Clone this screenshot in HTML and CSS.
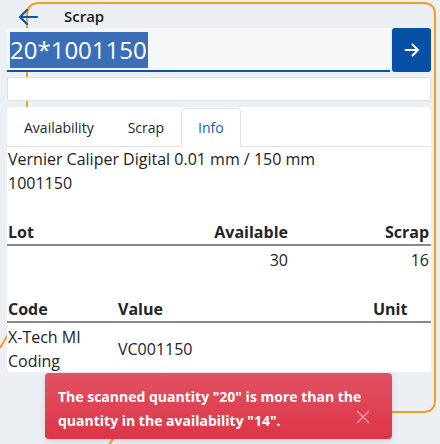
FILE: index.html
```html
<!DOCTYPE html>
<html>
<head>
<meta charset="utf-8">
<link rel="stylesheet" href="styles.css">
</head>
<body>
<svg class="deco" width="440" height="444" viewBox="0 0 440 444">
  <path d="M27 300 V15 Q27 3 40 3 H423 Q435 3 435 15 V400 Q435 412 423 412 H200" fill="none" stroke="#f4a01e" stroke-width="2"/>
  <path d="M0 348 L9 333" fill="none" stroke="#f4a01e" stroke-width="2"/>
  <path d="M108 446 L118 432" fill="none" stroke="#f4a01e" stroke-width="2"/>
</svg>
<div class="app">
  <header class="header">
    <svg class="back" width="22" height="18" viewBox="0 0 22 18"><path d="M20 9 H3 M10 2 L3 9 L10 16" fill="none" stroke="#0b55b0" stroke-width="2.2" stroke-linecap="round" stroke-linejoin="round"/></svg>
    <span class="title">Scrap</span>
  </header>
  <div class="scan">
    <div class="input"><span class="sel">20*1001150</span></div>
    <button class="go"><svg width="16" height="14" viewBox="0 0 16 14"><path d="M1.5 7 H14 M8.5 1.5 L14 7 L8.5 12.5" fill="none" stroke="#fff" stroke-width="2" stroke-linecap="round" stroke-linejoin="round"/></svg></button>
  </div>
  <div class="box2"></div>
  <section class="panel">
    <nav class="tabs">
      <span class="tab">Availability</span>
      <span class="tab">Scrap</span>
      <span class="tab active">Info</span>
    </nav>
    <div class="desc">
      <div>Vernier Caliper Digital 0.01 mm / 150 mm</div>
      <div>1001150</div>
    </div>
    <div class="grid lots">
      <div class="th">Lot</div><div class="th r">Available</div><div class="th r">Scrap</div>
      <div class="td"></div><div class="td r">30</div><div class="td r">16</div>
    </div>
    <div class="grid codes">
      <div class="th">Code</div><div class="th">Value</div><div class="th">Unit</div>
      <div class="td">X-Tech MI<br>Coding</div><div class="td mid">VC001150</div><div class="td"></div>
    </div>
  </section>
</div>
<div class="toast">
  <p>The scanned quantity "20" is more than the quantity in the availability "14".</p>
  <svg class="close" width="14" height="14" viewBox="0 0 14 14"><path d="M1 1 L13 13 M13 1 L1 13" stroke="rgba(255,255,255,0.45)" stroke-width="1.5"/></svg>
</div>
</body>
</html>
```
FILE: styles.css
```css
html, body { margin: 0; padding: 0; }
body {
  width: 440px;
  height: 444px;
  overflow: hidden;
  background: #eceff3;
  font-family: "Open Sans", "Noto Sans", sans-serif;
  color: #212529;
  position: relative;
}
.deco { position: absolute; left: 0; top: 0; z-index: 0; }
.app { position: relative; z-index: 1; padding: 0 9px 0 7px; }
.header { height: 28px; display: flex; align-items: center; }
.back { margin-left: 10px; margin-top: 5px; }
.title { margin-left: 25px; font-size: 15px; font-weight: 600; color: #1b1b1b; margin-top: 4px; }
.scan { display: flex; gap: 2px; height: 44px; }
.input {
  flex: 1;
  background: #f5f7f8;
  border-bottom: 2px solid #0b55b0;
  border-radius: 4px 0 0 0;
  box-sizing: border-box;
  padding: 4px 0 0 3px;
}
.sel {
  display: inline-block;
  background: #3a6fb7;
  color: #fff;
  font-size: 24px;
  line-height: 36px;
  height: 36px;
  padding-right: 1px;
}
.go {
  width: 39px;
  border: 0;
  border-radius: 3px;
  background: #0650a5;
  display: flex;
  align-items: center;
  justify-content: center;
  padding: 0;
}
.box2 {
  margin-top: 5px;
  height: 24px;
  box-sizing: border-box;
  background: #fff;
  border: 1px solid #dde1e5;
  border-radius: 3px;
}
.panel {
  margin-top: 6px;
  background: #fff;
  border-radius: 4px;
  height: 265px;
  box-sizing: border-box;
}
.tabs {
  display: flex;
  height: 40px;
  box-sizing: border-box;
  border-bottom: 1px solid #dee2e6;
  padding-top: 1px;
}
.tab {
  border: 1px solid transparent;
  border-radius: 4px 4px 0 0;
  padding: 0 16px;
  font-size: 14px;
  line-height: 37px;
  margin-bottom: -1px;
  color: #212529;
}
.tab.active {
  color: #1361b8;
  border-color: #dee2e6 #dee2e6 #fff;
  background: #fff;
}
.desc { font-size: 16px; line-height: 24px; padding-left: 1px; color: #222; }
.grid { display: grid; font-size: 16px; line-height: 24px; }
.lots { grid-template-columns: 1fr 100px 141px; margin-top: 25px; }
.codes { grid-template-columns: 110px 255px 1fr; margin-top: 25px; }
.th { font-weight: 700; border-bottom: 2px solid #8a8a8a; padding: 0 2px 0 1px; }
.td { padding: 2px 2px 0 1px; }
.r { text-align: right; }
.mid { align-self: center; }
.toast {
  position: absolute;
  z-index: 2;
  left: 45px;
  top: 373px;
  width: 347px;
  height: 66px;
  box-sizing: border-box;
  border-radius: 4px;
  background: linear-gradient(#e15363, #dc3546);
  box-shadow: 0 2px 6px rgba(0,0,0,0.12);
  padding: 12px 0 0 13px;
}
.toast p {
  margin: 0;
  width: 310px;
  font-size: 14px;
  font-weight: 700;
  line-height: 24px;
  color: #fff;
}
.close { position: absolute; top: 37px; left: 311px; }
```
